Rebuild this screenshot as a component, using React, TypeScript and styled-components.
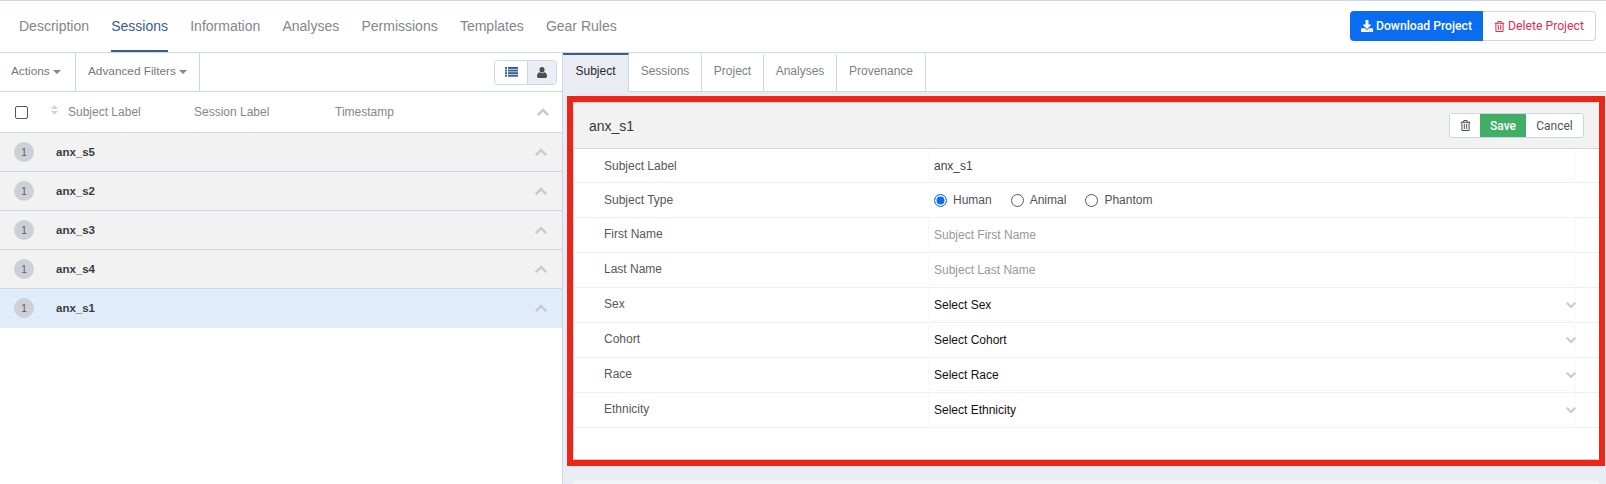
import React from "react";
import styled, { createGlobalStyle } from "styled-components";
import { FaDownload, FaRegTrashAlt } from "react-icons/fa";

const Global = createGlobalStyle`
  html, body { margin: 0; padding: 0; background: #fff; overflow: hidden; }
  body { font-family: "Liberation Sans", Arial, sans-serif; }
  * { box-sizing: border-box; }
`;

const line = "#ced5e3";

const Page = styled.div`
  width: 1606px; height: 484px; overflow: hidden; display: flex; flex-direction: column;
  border-top: 1px solid ${line};
`;
const TopBar = styled.div`
  height: 52px; flex: none; display: flex; justify-content: space-between; align-items: flex-start;
  border-bottom: 1px solid ${line}; padding: 10px 10px 0 19px;
`;
const MainTabs = styled.div`display: flex; gap: 22.2px; margin-top: -10px;`;
const MainTab = styled.div<{ $active?: boolean }>`
  height: 51px; line-height: 50px; font-size: 14px; color: ${p => p.$active ? "#3b5a94" : "#84868a"};
  border-bottom: 2px solid ${p => p.$active ? "#3b5a94" : "transparent"};
`;
const ButtonGroup = styled.div`display: flex;`;
const PrimaryBtn = styled.div`
  width: 133px; height: 30px; background: #0a6cf0; color: #fff; border-radius: 4px 0 0 4px;
  font: 500 12.2px Roboto, sans-serif; display: flex; align-items: center; justify-content: center; gap: 3px;
`;
const DangerBtn = styled.div`
  width: 113px; height: 30px; background: #fff; color: #dc2f4e; border: 1px solid ${line}; border-left: 0;
  border-radius: 0 4px 4px 0; font: 400 12.2px Roboto, sans-serif;
  display: flex; align-items: center; justify-content: center; gap: 3px;
`;
const Body = styled.div`flex: 1; display: flex; min-height: 0;`;
const LeftPane = styled.div`width: 562px; flex: none; display: flex; flex-direction: column;`;
const Toolbar = styled.div`
  height: 39px; flex: none; display: flex; align-items: stretch; border-bottom: 1px solid ${line};
`;
const ToolItem = styled.div<{ $w: number; $pad: number }>`
  width: ${p => p.$w}px; padding-left: ${p => p.$pad}px; border-right: 1px solid ${line};
  font-size: 11.8px; color: #75777b; display: flex; align-items: center; gap: 2px; padding-bottom: 2px;
`;
const Caret = styled.span`
  width: 0; height: 0; border-left: 4px solid transparent; border-right: 4px solid transparent;
  border-top: 4px solid #84868a; margin-left: 1px; margin-top: 1px;
`;
const Spacer = styled.div`flex: 1;`;
const Toggle = styled.div`
  display: flex; align-self: center; margin-right: 5px; height: 25px;
  border: 1px solid ${line}; border-radius: 4px; overflow: hidden;
`;
const ToggleBtn = styled.div<{ $on?: boolean }>`
  width: ${p => p.$on ? 32 : 29}px; display: flex; align-items: center; justify-content: center;
  background: ${p => p.$on ? "#fff" : "#eaedf3"};
  & + & { border-left: 1px solid ${line}; }
`;
const HeadRow = styled.div`
  height: 41px; flex: none; display: flex; align-items: center; border-bottom: 1px solid ${line};
  font-size: 12px; color: #85878b; padding-left: 15px;
`;
const Check = styled.span`
  width: 13px; height: 13px; border: 1px solid #55585c; border-radius: 2px; background: #fff; flex: none;
  margin-top: 1px;
`;
const SortCol = styled.span`display: flex; margin: -4px 10px 0 23px;`;
const Col = styled.span<{ $w: number }>`width: ${p => p.$w}px; flex: none;`;
const Chevron = styled.span`margin-left: auto; margin-right: 13px; display: flex;`;
const SubjectRow = styled.div<{ $sel?: boolean }>`
  height: 39px; flex: none; display: flex; align-items: center; padding-left: 14px;
  background: ${p => p.$sel ? "#e0ecfa" : "#f2f2f2"};
  border-bottom: 1px solid ${p => p.$sel ? "#e0ecfa" : line};
`;
const Badge = styled.span`
  width: 20px; height: 20px; border-radius: 50%; background: #cdd0d7; color: #5a5d61; font-size: 10px;
  display: flex; align-items: center; justify-content: center; flex: none; margin-right: 22px;
`;
const SubjectName = styled.span`font-size: 11.5px; font-weight: 700; color: #3a3c40;`;
const RowChevron = styled(Chevron)`margin-right: 15px;`;
const RightPane = styled.div`
  flex: 1; background: #e9edf3; border-left: 1px solid ${line}; display: flex; flex-direction: column; min-width: 0;
`;
const SubTabs = styled.div`
  height: 39px; flex: none; display: flex; background: #fff; border-bottom: 1px solid ${line};
`;
const SubTab = styled.div<{ $w: number; $active?: boolean }>`
  width: ${p => p.$w}px; display: flex; align-items: center; justify-content: center; font-size: 12px;
  padding-bottom: 5px; margin-bottom: ${p => p.$active ? "-1px" : 0};
  border-right: 1px solid ${line};
  color: ${p => p.$active ? "#26282c" : "#7d7f84"}; background: ${p => p.$active ? "#e9edf3" : "#fff"};
  border-top: 2px solid ${p => p.$active ? "#3b5a94" : "transparent"};
`;
const Highlight = styled.div`
  margin: 4px 0 0 4px; width: 1038px; height: 370px; flex: none; border: 6px solid #ee2417; background: #fff;
`;
const Card = styled.div`
  height: 100%; display: flex; flex-direction: column; border: 1px solid #d3d7e1; border-bottom-color: #c4c8d2;
  border-right: 0; border-radius: 2px;
`;
const CardHead = styled.div`
  height: 46px; flex: none; display: flex; align-items: center; justify-content: space-between;
  background: #f2f2f2; border-bottom: 1px solid ${line}; padding: 0 15px 0 15px;
`;
const CardTitle = styled.span`font-size: 14px; color: #35373b;`;
const CardBtns = styled.div`
  display: flex; height: 25px; border: 1px solid ${line}; border-radius: 3px; overflow: hidden;
`;
const IconBtn = styled.div`
  width: 30px; background: #fff; color: #505358; font-size: 11px;
  display: flex; align-items: center; justify-content: center;
`;
const SaveBtn = styled.div`
  width: 46px; background: #41ae65; color: #fff; font: 500 12px Roboto, sans-serif;
  display: flex; align-items: center; justify-content: center;
`;
const CancelBtn = styled.div`
  width: 57px; background: #fff; color: #505358; font: 400 12px Roboto, sans-serif;
  display: flex; align-items: center; justify-content: center;
`;
const FormRow = styled.div`
  height: 35px; flex: none; display: flex; border-bottom: 1px solid #edeff3; position: relative;
  ${CardHead} + & { height: 34px; }
`;
const FieldLabel = styled.div<{ $low?: boolean }>`
  width: 354px; flex: none; padding: ${p => p.$low ? 10 : 9}px 0 0 30px; font-size: 12px; line-height: 14px; color: #55585c;
`;
const FieldValue = styled.div<{ $muted?: boolean; $dark?: boolean }>`
  width: 648px; flex: none; padding: 10px 0 0 5px; font-size: 12px; line-height: 15px; margin-bottom: 1px;
  color: ${p => p.$muted ? "#96999e" : p.$dark ? "#111" : "#3f4246"};
  border: 1px solid #f8f8f9; border-width: 0 1px 1px 1px; border-radius: 0 0 3px 3px;
`;
const Radios = styled.div`display: flex; gap: 19px; padding: 10px 0 0 6px; font-size: 12px; color: #505358;`;
const RadioItem = styled.label`display: flex; align-items: center; gap: 6px; height: 14px;`;
const RadioMark = styled.span<{ $on?: boolean }>`
  width: 13px; height: 13px; border-radius: 50%; background: #fff;
  border: ${p => p.$on ? "1px solid #0a6cf0" : "1px solid #55585c"};
  box-shadow: ${p => p.$on ? "inset 0 0 0 1.5px #fff, inset 0 0 0 7px #0a6cf0" : "none"};
`;
const SelectChevron = styled.span`position: absolute; left: 992px; top: 14px; display: flex;`;
const NextCard = styled.div`
  margin: 14px 0 0 10px; width: 1026px; height: 20px; background: #f3f5f8; flex: none;
  border-top: 1px solid #eef0f4;
`;

const Chev = ({ up, w = 12 }: { up?: boolean; w?: number }) => (
  <svg width={w} height={w * 0.67} viewBox="0 0 12 8" fill="none" stroke="#cbcbcd" strokeWidth="2.6" strokeLinecap="square">
    <path d={up ? "M1.8 6.2 L6 2 L10.2 6.2" : "M1.8 1.8 L6 6 L10.2 1.8"} />
  </svg>
);
const ListIcon = () => (
  <svg width="13" height="10" viewBox="0 0 13 10" fill="#3b5a94">
    {[0, 2.6, 5.2, 7.8].map(y => (
      <g key={y}>
        <rect x="0" y={y} width="2" height="1.9" />
        <rect x="3" y={y} width="10" height="1.9" />
      </g>
    ))}
  </svg>
);
const UserIcon = () => (
  <svg width="10" height="11" viewBox="0 0 10 11" fill="#4b4d51">
    <ellipse cx="5" cy="2.8" rx="2.5" ry="2.8" />
    <path d="M0 9.6C0 7 1 5.6 2.7 5.3 3.3 5.9 4.1 6.2 5 6.2S6.7 5.9 7.3 5.3C9 5.6 10 7 10 9.6 10 10.5 9.4 11 8.6 11H1.4C.6 11 0 10.5 0 9.6Z" />
  </svg>
);
const SortIcon = () => (
  <svg width="7" height="10" viewBox="0 0 7 10" fill="#cdd3de">
    <path d="M3.5 0 L7 4 H0Z M0 6 H7 L3.5 10Z" />
  </svg>
);

const subjects = ["anx_s5", "anx_s2", "anx_s3", "anx_s4", "anx_s1"];
const inputs = [
  ["First Name", "Subject First Name"],
  ["Last Name", "Subject Last Name"],
];
const selects = [
  ["Sex", "Select Sex"],
  ["Cohort", "Select Cohort"],
  ["Race", "Select Race"],
  ["Ethnicity", "Select Ethnicity"],
];

export default function App() {
  return (
    <Page>
      <Global />
      <TopBar>
        <MainTabs>
          {["Description", "Sessions", "Information", "Analyses", "Permissions", "Templates", "Gear Rules"].map(t => (
            <MainTab key={t} $active={t === "Sessions"}>{t}</MainTab>
          ))}
        </MainTabs>
        <ButtonGroup>
          <PrimaryBtn><FaDownload size={12} /> Download Project</PrimaryBtn>
          <DangerBtn><FaRegTrashAlt size={11} /> Delete Project</DangerBtn>
        </ButtonGroup>
      </TopBar>
      <Body>
        <LeftPane>
          <Toolbar>
            <ToolItem $w={76} $pad={11}>Actions <Caret /></ToolItem>
            <ToolItem $w={124} $pad={12}>Advanced Filters <Caret /></ToolItem>
            <Spacer />
            <Toggle>
              <ToggleBtn $on><ListIcon /></ToggleBtn>
              <ToggleBtn><UserIcon /></ToggleBtn>
            </Toggle>
          </Toolbar>
          <HeadRow>
            <Check />
            <SortCol><SortIcon /></SortCol>
            <Col $w={126}>Subject Label</Col>
            <Col $w={141}>Session Label</Col>
            <Col $w={100}>Timestamp</Col>
            <Chevron><Chev up /></Chevron>
          </HeadRow>
          {subjects.map(s => (
            <SubjectRow key={s} $sel={s === "anx_s1"}>
              <Badge>1</Badge>
              <SubjectName>{s}</SubjectName>
              <RowChevron><Chev up /></RowChevron>
            </SubjectRow>
          ))}
        </LeftPane>
        <RightPane>
          <SubTabs>
            <SubTab $w={66} $active>Subject</SubTab>
            <SubTab $w={73}>Sessions</SubTab>
            <SubTab $w={62}>Project</SubTab>
            <SubTab $w={73}>Analyses</SubTab>
            <SubTab $w={89}>Provenance</SubTab>
          </SubTabs>
          <Highlight>
            <Card>
              <CardHead>
                <CardTitle>anx_s1</CardTitle>
                <CardBtns>
                  <IconBtn><FaRegTrashAlt /></IconBtn>
                  <SaveBtn>Save</SaveBtn>
                  <CancelBtn>Cancel</CancelBtn>
                </CardBtns>
              </CardHead>
              <FormRow>
                <FieldLabel $low>Subject Label</FieldLabel>
                <FieldValue>anx_s1</FieldValue>
              </FormRow>
              <FormRow>
                <FieldLabel $low>Subject Type</FieldLabel>
                <Radios>
                  <RadioItem><RadioMark $on />Human</RadioItem>
                  <RadioItem><RadioMark />Animal</RadioItem>
                  <RadioItem><RadioMark />Phantom</RadioItem>
                </Radios>
              </FormRow>
              {inputs.map(([l, v]) => (
                <FormRow key={l}>
                  <FieldLabel>{l}</FieldLabel>
                  <FieldValue $muted>{v}</FieldValue>
                </FormRow>
              ))}
              {selects.map(([l, v]) => (
                <FormRow key={l}>
                  <FieldLabel>{l}</FieldLabel>
                  <FieldValue $dark>{v}</FieldValue>
                  <SelectChevron><Chev w={10} /></SelectChevron>
                </FormRow>
              ))}
            </Card>
          </Highlight>
          <NextCard />
        </RightPane>
      </Body>
    </Page>
  );
}
